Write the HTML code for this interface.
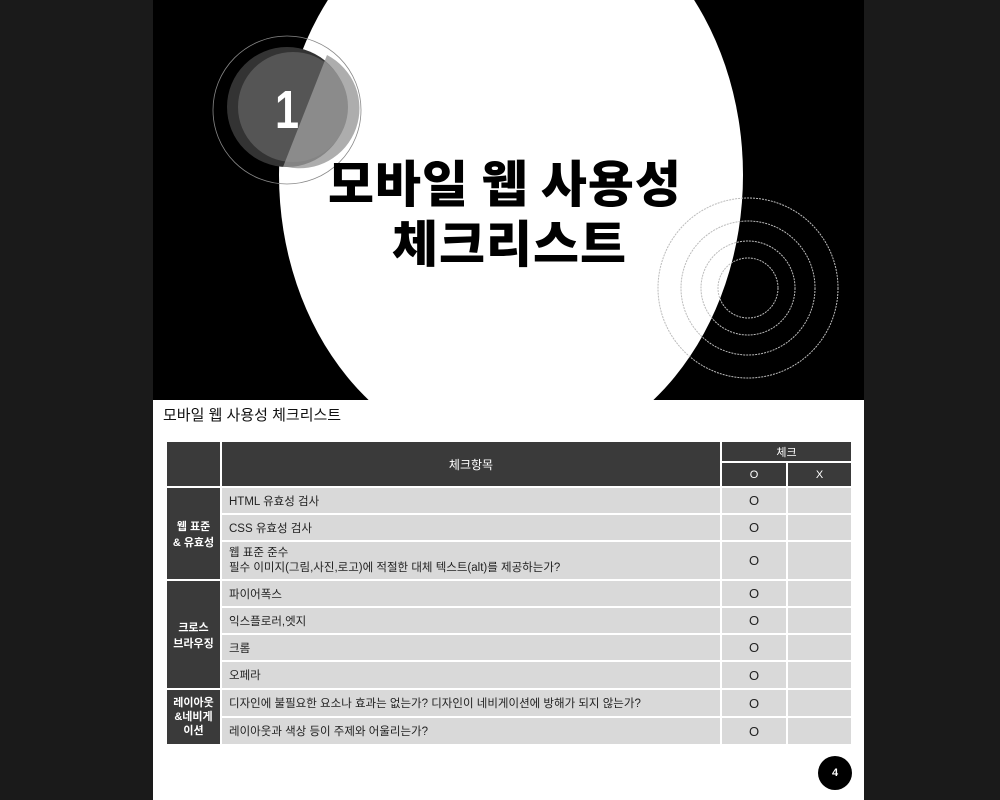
<!DOCTYPE html>
<html><head><meta charset="utf-8"><style>
body{margin:0;width:1000px;height:800px;background:#1a1a1a;position:relative;overflow:hidden;font-family:"Liberation Sans","Noto Sans CJK KR",sans-serif}
#top{position:absolute;left:153px;top:0;width:711px;height:400px;background:#000;overflow:hidden}
#bot{position:absolute;left:153px;top:400px;width:711px;height:400px;background:#fff}
.t{position:absolute;font-weight:900;color:#000;font-size:50px;letter-spacing:1px;white-space:nowrap;font-family:"Noto Sans CJK KR",sans-serif}
table{position:absolute;left:12px;top:40px;width:688px;border-collapse:collapse;font-size:11.5px;color:#222}
td{border:2px solid #fff;background:#d9d9d9;padding:0 7px;height:23px}
td.h{background:#3a3a3a;color:#fff;text-align:center;font-size:11px;padding:0}
td.c{text-align:center;font-size:13px;padding:0}
</style></head><body>
<div id="top">
<svg width="711" height="400" style="position:absolute;left:0;top:0">
<ellipse cx="358" cy="175" rx="232" ry="285" fill="#fff"/>
<circle cx="134" cy="110" r="74" fill="none" stroke="#888" stroke-width="0.8"/>
<circle cx="134" cy="107" r="60" fill="#333"/>
<circle cx="140" cy="107" r="55" fill="#555"/>
<path d="M174 55 A60 60 0 0 1 134 167 L130 167 Z" fill="#999" opacity="0.8"/>
<g fill="none" stroke="#bbb" stroke-width="1" stroke-dasharray="2 1">
<circle cx="595" cy="288" r="90"/><circle cx="595" cy="288" r="67"/><circle cx="595" cy="288" r="47"/><circle cx="595" cy="288" r="30"/>
</g>
<text x="134" y="128" fill="#fff" font-size="54" font-weight="900" text-anchor="middle" font-family="Liberation Sans,sans-serif" transform="translate(134 0) scale(0.8 1) translate(-134 0)">1</text>
</svg>
<div class="t" style="left:175px;top:145px">모바일 웹 사용성</div>
<div class="t" style="left:239px;top:205px">체크리스트</div>
</div>
<div id="bot">
<div style="position:absolute;left:10px;top:4px;font-size:15px;color:#111">모바일 웹 사용성 체크리스트</div>
<table>
<tr><td class="h" rowspan="2" style="width:53px"></td><td class="h" rowspan="2" style="font-size:12px">체크항목</td><td class="h" colspan="2" style="height:19px">체크</td></tr>
<tr><td class="h" style="width:64px;height:19px">O</td><td class="h" style="width:63px">X</td></tr>
<tr><td class="h" rowspan="3" style="font-weight:bold">웹 표준<br>&amp; 유효성</td><td style="height:25px">HTML 유효성 검사</td><td class="c">O</td><td></td></tr>
<tr><td style="height:25px">CSS 유효성 검사</td><td class="c">O</td><td></td></tr>
<tr><td style="height:37px;line-height:15px">웹 표준 준수<br>필수 이미지(그림,사진,로고)에 적절한 대체 텍스트(alt)를 제공하는가?</td><td class="c">O</td><td></td></tr>
<tr><td class="h" rowspan="4" style="font-weight:bold">크로스<br>브라우징</td><td style="height:25px">파이어폭스</td><td class="c">O</td><td></td></tr>
<tr><td style="height:25px">익스플로러,엣지</td><td class="c">O</td><td></td></tr>
<tr><td style="height:25px">크롬</td><td class="c">O</td><td></td></tr>
<tr><td style="height:26px">오페라</td><td class="c">O</td><td></td></tr>
<tr><td class="h" rowspan="2" style="font-weight:bold;line-height:14px">레이아웃<br>&amp;네비게<br>이션</td><td style="height:26px">디자인에 불필요한 요소나 효과는 없는가? 디자인이 네비게이션에 방해가 되지 않는가?</td><td class="c">O</td><td></td></tr>
<tr><td style="height:26px">레이아웃과 색상 등이 주제와 어울리는가?</td><td class="c">O</td><td></td></tr>
</table>
<div style="position:absolute;left:665px;top:356px;width:34px;height:34px;border-radius:50%;background:#000;color:#fff;font-size:11px;font-weight:bold;text-align:center;line-height:34px">4</div>
</div>
</body></html>
